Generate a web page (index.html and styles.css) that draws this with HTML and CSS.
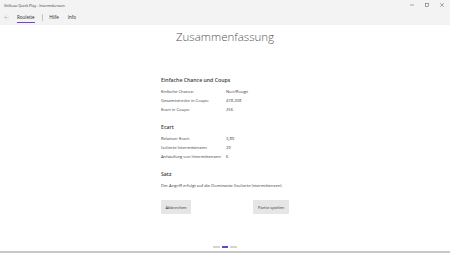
FILE: index.html
```html
<!DOCTYPE html>
<html lang="de">
<head>
    <meta charset="UTF-8">
    <title>Grilleau Quick Play - Intermittenzen</title>
    <link rel="stylesheet" href="styles.css">
</head>
<body>
    <div class="window">
        <!-- Title bar -->
        <div class="titlebar">
            <span class="app-title">Grilleau Quick Play - Intermittenzen</span>
            <div class="win-controls">
                <svg width="4" height="4" viewBox="0 0 4 4"><path d="M0 2h4" stroke="#555" stroke-width="0.5"/></svg>
                <svg width="4" height="4" viewBox="0 0 4 4"><rect x="0.3" y="0.3" width="3.4" height="3.4" fill="none" stroke="#555" stroke-width="0.5"/></svg>
                <svg width="4" height="4" viewBox="0 0 4 4"><path d="M0.2 0.2l3.6 3.6M3.8 0.2l-3.6 3.6" stroke="#555" stroke-width="0.5"/></svg>
            </div>
        </div>

        <!-- Navigation -->
        <div class="navbar">
            <svg class="back" width="5" height="5" viewBox="0 0 5 5"><path d="M4.8 2.5h-4.4M2.4 0.5L0.4 2.5 2.4 4.5" fill="none" stroke="#b0b0b0" stroke-width="0.5"/></svg>
            <span class="nav-item active">Roulette</span>
            <span class="nav-sep"></span>
            <span class="nav-item">Hilfe</span>
            <span class="nav-item">Info</span>
        </div>

        <!-- Content -->
        <div class="content">
            <h1>Zusammenfassung</h1>

            <div class="summary">
                <h3>Einfache Chance und Coups</h3>
                <div class="rows">
                    <span>Einfache Chance:</span><span>Noir/Rouge</span>
                    <span>Gesamtstrecke in Coups:</span><span>478.208</span>
                    <span>Ecart in Coups:</span><span>256</span>
                </div>

                <h3>Ecart</h3>
                <div class="rows">
                    <span>Relativer Ecart:</span><span>3,89</span>
                    <span>Isolierte Intermittenzen:</span><span>29</span>
                    <span>Anhäufung von Intermittenzen:</span><span>6</span>
                </div>

                <h3>Satz</h3>
                <p class="note">Der Angriff erfolgt auf die Dominante (Isolierte Intermittenzen).</p>

                <div class="buttons">
                    <button class="cancel">Abbrechen</button>
                    <button class="play">Partie spielen</button>
                </div>
            </div>
        </div>

        <!-- Pager -->
        <div class="pager">
            <span class="dot"></span>
            <span class="dot current"></span>
            <span class="dot"></span>
        </div>
    </div>
</body>
</html>
```

FILE: styles.css
```css
/* Basic reset */
* {
    box-sizing: border-box;
    margin: 0;
    padding: 0;
}
body {
    font-family: 'Open Sans', 'Noto Sans', sans-serif;
    background-color: #fff;
    color: #333;
    width: 450px;
    height: 253px;
    overflow: hidden;
}
.window {
    display: flex;
    flex-direction: column;
    height: 253px;
    border-bottom: 2px solid #c8c8c8;
}
/* Title bar */
.titlebar {
    display: flex;
    align-items: center;
    justify-content: space-between;
    height: 10px;
    padding: 0 6px 0 4px;
    background-color: #f3f3f3;
}
.app-title {
    font-size: 3.7px;
    color: #333;
}
.win-controls {
    display: flex;
    gap: 11px;
}
/* Navigation */
.navbar {
    display: flex;
    align-items: center;
    height: 15px;
    padding-left: 4px;
    background-color: #f3f3f3;
}
.back {
    margin-right: 8px;
}
.nav-item {
    position: relative;
    font-size: 4.5px;
    color: #222;
    margin-right: 9px;
    line-height: 15px;
}
.nav-item.active {
    margin-right: 7px;
}
.nav-item.active::after {
    content: "";
    position: absolute;
    left: 0;
    right: 0;
    bottom: 2px;
    height: 1px;
    background-color: #7a3fd6;
}
.nav-sep {
    width: 0.5px;
    height: 7px;
    background-color: #c4c4c4;
    margin-right: 7px;
}
/* Content */
.content {
    flex: 1;
    display: flex;
    flex-direction: column;
    align-items: center;
}
h1 {
    font-weight: 300;
    font-size: 11.5px;
    line-height: 14px;
    color: #555;
    margin-top: 5px;
}
.summary {
    width: 128px;
    margin-top: 32px;
}
h3 {
    font-weight: 600;
    font-size: 5.2px;
    line-height: 8px;
    color: #3a3a3a;
    margin-bottom: 3px;
}
.rows {
    display: grid;
    grid-template-columns: 65px 1fr;
    font-size: 4.15px;
    line-height: 9px;
    color: #3a3a3a;
    margin-bottom: 9px;
    white-space: nowrap;
}
.note {
    font-size: 4.15px;
    line-height: 9px;
    color: #3a3a3a;
    white-space: nowrap;
    margin-bottom: 10px;
}
.buttons {
    display: flex;
    justify-content: space-between;
}
button {
    font-family: inherit;
    font-size: 4.15px;
    color: #333;
    background-color: #e6e6e6;
    border: none;
    height: 14px;
}
.cancel {
    width: 30px;
}
.play {
    width: 36px;
}
/* Pager */
.pager {
    display: flex;
    justify-content: center;
    gap: 2px;
    padding-bottom: 3.5px;
}
.dot {
    width: 6.5px;
    height: 2px;
    background-color: #d4d4d4;
}
.dot.current {
    background-color: #6e3fd0;
}
```
